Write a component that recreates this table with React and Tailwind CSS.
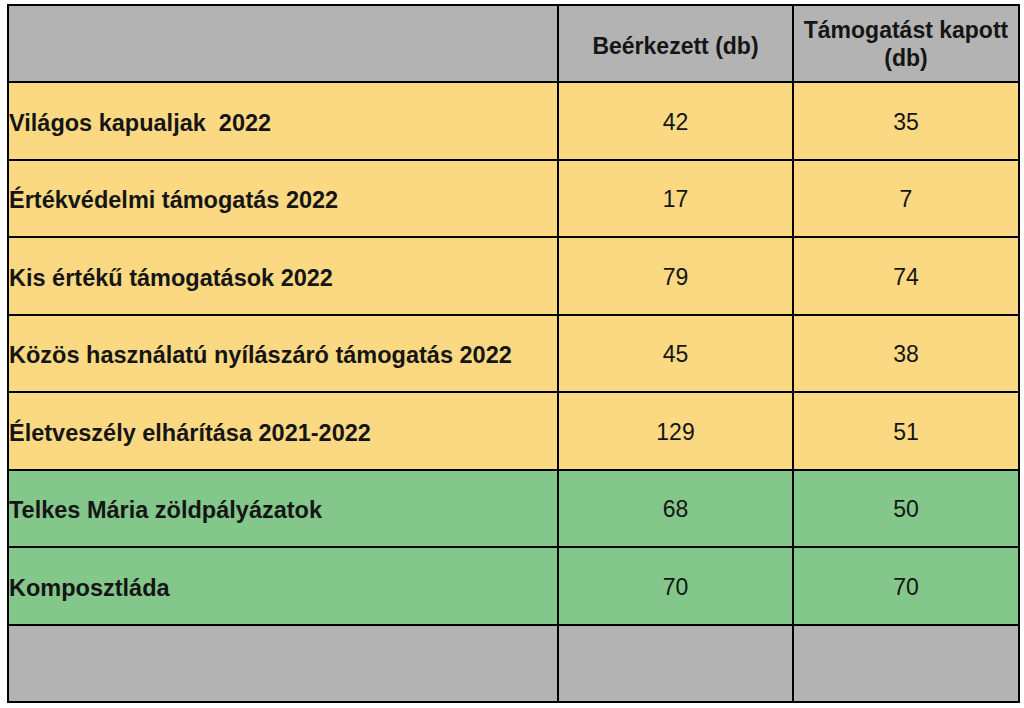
const rows = [
  { name: 'Világos kapualjak  2022', received: 42, granted: 35, tone: 'yellow' },
  { name: 'Értékvédelmi támogatás 2022', received: 17, granted: 7, tone: 'yellow' },
  { name: 'Kis értékű támogatások 2022', received: 79, granted: 74, tone: 'yellow' },
  { name: 'Közös használatú nyílászáró támogatás 2022', received: 45, granted: 38, tone: 'yellow' },
  { name: 'Életveszély elhárítása 2021-2022', received: 129, granted: 51, tone: 'yellow' },
  { name: 'Telkes Mária zöldpályázatok', received: 68, granted: 50, tone: 'green' },
  { name: 'Komposztláda', received: 70, granted: 70, tone: 'green' },
];

const toneBg = {
  yellow: 'bg-[#fbd982]',
  green: 'bg-[#84c78a]',
};

const App = () => {
  return (
    <div className="w-[1024px] h-[708px] bg-white pt-[4px] pl-[7px] font-['Liberation_Sans',Arial,sans-serif] text-[#151515]">
      <table className="w-[1011px] border-collapse table-fixed">
        <colgroup>
          <col className="w-[550px]" />
          <col className="w-[235px]" />
          <col className="w-[226px]" />
        </colgroup>
        <thead>
          <tr className="h-[77px] bg-[#b3b3b3]">
            <th className="border-2 border-black" />
            <th className="border-2 border-black text-[23px] font-bold text-center leading-[28px] pt-[4px]">
              Beérkezett (db)
            </th>
            <th className="border-2 border-black text-[23px] font-bold text-center leading-[28px]">
              Támogatást kapott (db)
            </th>
          </tr>
        </thead>
        <tbody>
          {rows.map((row) => (
            <tr key={row.name} className={`h-[77.5px] ${toneBg[row.tone]}`}>
              <td className="border-2 border-black pl-0 pt-[5px] text-[23.5px] font-bold whitespace-pre">
                {row.name}
              </td>
              <td className="border-2 border-black text-center text-[23px] pt-[2px]">{row.received}</td>
              <td className="border-2 border-black text-center text-[23px] pt-[2px]">{row.granted}</td>
            </tr>
          ))}
          {/* empty footer row */}
          <tr className="h-[77px] bg-[#b3b3b3]">
            <td className="border-2 border-black" />
            <td className="border-2 border-black" />
            <td className="border-2 border-black" />
          </tr>
        </tbody>
      </table>
    </div>
  );
};

export default App;
